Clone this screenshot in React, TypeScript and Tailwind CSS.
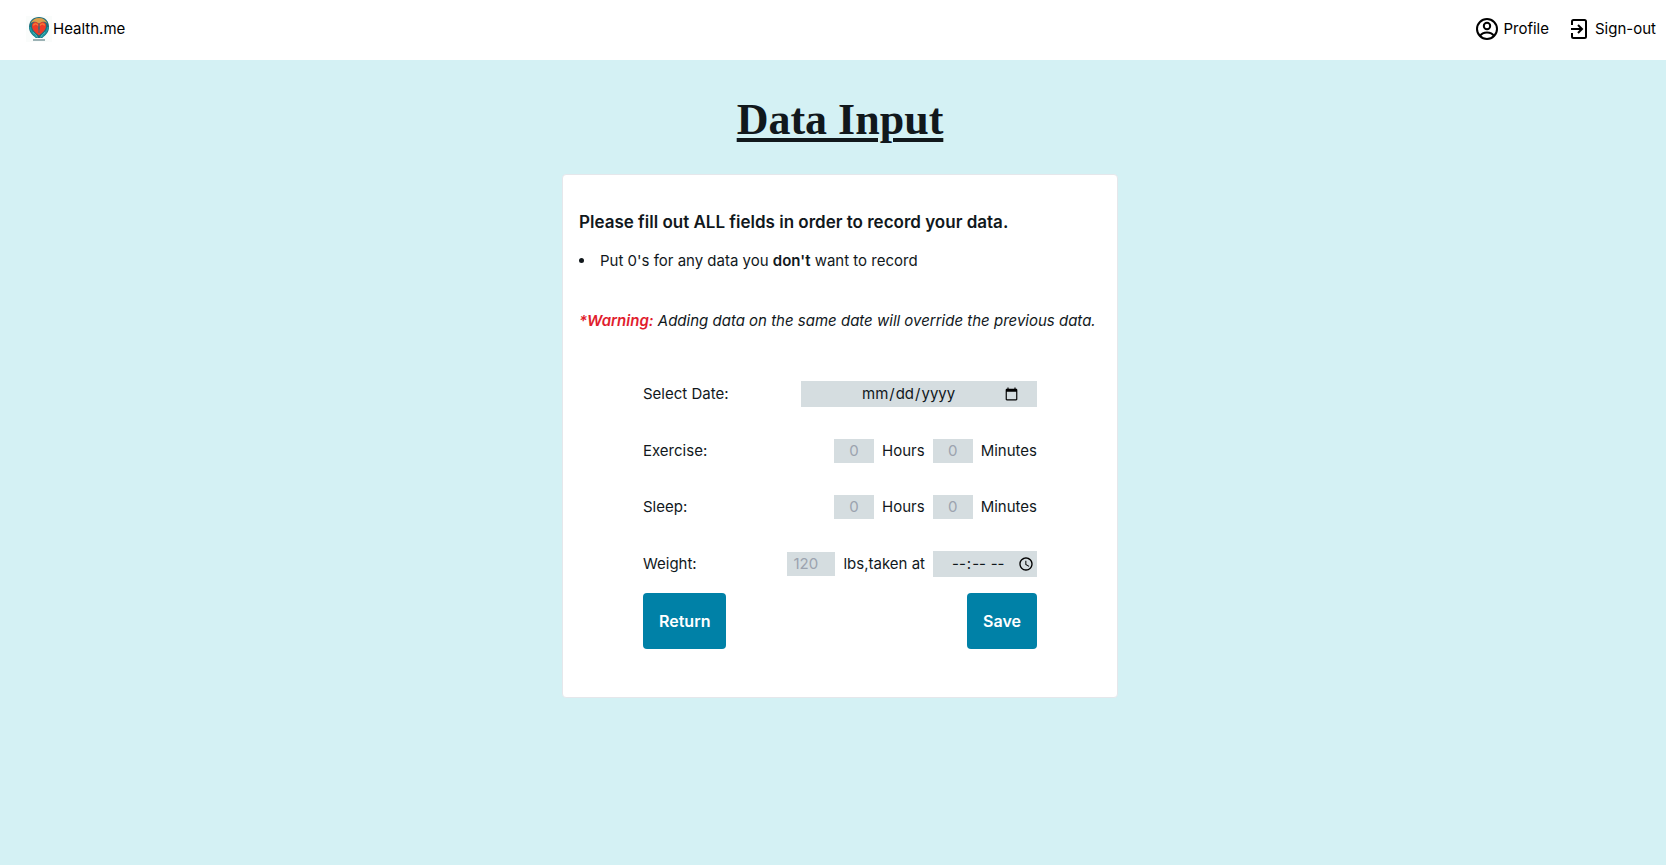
import React from "react";

const field = "bg-[#d5dde0] text-[#11181c] placeholder:text-[#9ca3af] outline-none";

function Logo() {
  return (
    <svg viewBox="0 0 26 26" className="size-[26px]" aria-hidden="true">
      <rect width="26" height="26" fill="#fafcfb" />
      <path d="M13 1C7 1 3 5 3 11c0 5 3 8 7 11h6c4-3 7-6 7-11 0-6-4-10-10-10z" fill="#1f6f7d" />
      <path d="M13 2C9 2 6 4 4.500 7.500 6 6 8 5.500 10 6l3 2 3-2c2-.5 4 0 5.500 1.500C20 4 17 2 13 2z" fill="#dda04a" />
      <path d="M13 19.500C9 16.500 6 13.500 6 10 6 7.500 7.500 6 9.500 6c1.600 0 2.700 1 3.500 2.500C13.800 7 14.900 6 16.500 6 18.500 6 20 7.500 20 10c0 3.500-3 6.500-7 9.500z" fill="#ee3b27" />
      <path d="M7.500 9.500c.5-2 3-2.500 4.500 0M14 9.500c1.500-2.500 4-2 4.500 0" stroke="#f7863a" strokeWidth="1.200" fill="none" />
      <path d="M13 7v10" stroke="#4d6770" strokeWidth="1" fill="none" />
      <path d="M12 10.500h2v3h-2z" fill="#5a6468" />
      <path d="M4 11c.5 5 4 7 6.500 10.500M22 11c-.5 5-4 7-6.500 10.500" stroke="#1b9aa2" strokeWidth="1.600" fill="none" />
      <path d="M7 16.500c2 1 3.500 3 4.500 5M19 16.500c-2 1-3.500 3-4.500 5" stroke="#54c3bf" strokeWidth="1" fill="none" />
      <path d="M7 24h12" stroke="#7d9a9e" strokeWidth="1.500" />
    </svg>
  );
}

function ProfileIcon() {
  return (
    <svg viewBox="0 0 24 24" className="size-6" fill="none" stroke="currentColor" strokeWidth="2" aria-hidden="true">
      <circle cx="12" cy="12" r="10" />
      <circle cx="12" cy="9" r="3.200" />
      <path d="M5 19c1.500-2.500 4-3.500 7-3.500s5.500 1 7 3.500" />
    </svg>
  );
}

function SignOutIcon() {
  return (
    <svg viewBox="0 0 24 24" className="size-6" fill="none" stroke="currentColor" strokeWidth="2" aria-hidden="true">
      <path d="M5 8V4.500A1.500 1.500 0 0 1 6.500 3h11A1.500 1.500 0 0 1 19 4.500v15a1.500 1.500 0 0 1-1.500 1.500h-11A1.500 1.500 0 0 1 5 19.500V16" />
      <path d="M4 12h10.500M11 8l4 4-4 4" />
    </svg>
  );
}

function DurationRow({ label, name }: { label: string; name: string }) {
  return (
    <fieldset className="flex h-6 items-center justify-between">
      <legend className="float-left">{label}</legend>
      <div className="ml-auto flex items-center gap-2">
        <input id={`${name}-hours`} placeholder="0" className={`${field} h-6 w-10 text-center`} />
        <label htmlFor={`${name}-hours`}>Hours</label>
        <input id={`${name}-minutes`} placeholder="0" className={`${field} h-6 w-10 text-center`} />
        <label htmlFor={`${name}-minutes`}>Minutes</label>
      </div>
    </fieldset>
  );
}

export default function App() {
  return (
    <div className="min-h-screen bg-[#d4f1f4] font-['Inter',sans-serif] text-[15px] leading-6 text-[#11181c]">
      <header className="flex h-[60px] items-center justify-between bg-white pr-[10px] pb-[2px] pl-[26px] text-black">
        <a href="#" className="flex items-center gap-px">
          <Logo />
          Health.me
        </a>
        <nav className="flex items-center gap-[18px]">
          <a href="#profile" className="flex items-center gap-1">
            <ProfileIcon />
            Profile
          </a>
          <a href="#sign-out" className="flex items-center gap-1">
            <SignOutIcon />
            Sign-out
          </a>
        </nav>
      </header>

      <main className="flex flex-col items-center pt-8 pl-[14px]">
        <h1 className="font-['Liberation_Serif',serif] text-[44px] leading-[56px] font-bold underline decoration-4 underline-offset-4">Data Input</h1>
        <section className="mt-[26px] w-full max-w-[556px] rounded border border-gray-200 bg-white px-4 pt-8 pb-12">
          <h2 className="text-[17px] leading-[30px] font-semibold">Please fill out ALL fields in order to record your data.</h2>
          <ul className="mt-3 list-inside list-disc">
            <li>
              Put 0's for any data you <strong className="font-semibold">don't</strong> want to record
            </li>
          </ul>
          <p className="mt-9 italic sm:whitespace-nowrap">
            <strong className="font-semibold text-[#e11d2e]">*Warning:</strong> Adding data on the same date will override the previous data.
          </p>

          <form className="mx-16 mt-12 flex flex-col" onSubmit={(e) => e.preventDefault()}>
            <div className="flex flex-col gap-8">
              <div className="flex items-center justify-between">
                <label htmlFor="date">Select Date:</label>
                <input id="date" type="date" className={`${field} h-[26px] w-[236px] pr-4 pl-[60px]`} />
              </div>
              <DurationRow label="Exercise:" name="exercise" />
              <DurationRow label="Sleep:" name="sleep" />
              <div className="flex items-center justify-between">
                <label htmlFor="weight">Weight:</label>
                <div className="flex items-center gap-2">
                  <input id="weight" placeholder="120" className={`${field} h-6 w-12 px-[6px]`} />
                  <label htmlFor="time">lbs,taken at</label>
                  <input id="time" type="time" className={`${field} h-[26px] w-[104px] pl-[18px] [&::-webkit-calendar-picker-indicator]:ml-0`} />
                </div>
              </div>
            </div>
            <div className="mt-4 flex justify-between text-base">
              <button type="button" className="h-14 rounded bg-[#0081a7] px-4 font-semibold text-white">Return</button>
              <button type="submit" className="h-14 rounded bg-[#0081a7] px-4 font-semibold text-white">Save</button>
            </div>
          </form>
        </section>
      </main>
    </div>
  );
}
